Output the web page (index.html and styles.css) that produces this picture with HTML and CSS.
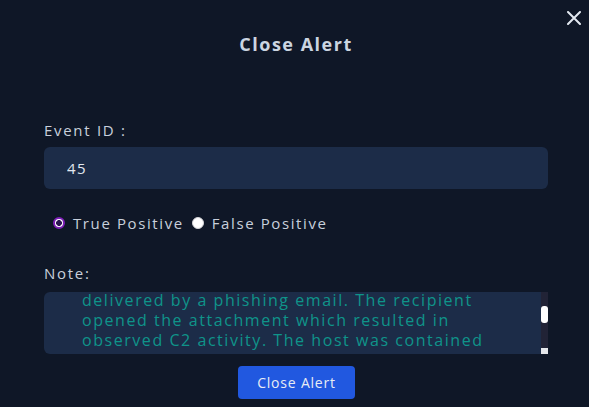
FILE: index.html
```html
<!DOCTYPE html>
<html lang="en">
<head>
<meta charset="utf-8">
<title>Close Alert</title>
<link rel="stylesheet" href="styles.css">
</head>
<body>
<div class="modal">
  <button class="close-x" type="button" aria-label="Close">
    <svg width="14" height="14" viewBox="0 0 14 14"><path d="M1 1L13 13M13 1L1 13" stroke="#e2e8f0" stroke-width="2" stroke-linecap="round"/></svg>
  </button>
  <h2 class="title">Close Alert</h2>
  <form class="form">
    <label class="label" for="eid">Event ID :</label>
    <input id="eid" class="input" type="text" value="45">
    <div class="radios">
      <label class="radio"><input type="radio" name="verdict" checked><span>True Positive</span></label>
      <label class="radio"><input type="radio" name="verdict"><span>False Positive</span></label>
    </div>
    <label class="label note-label" for="note">Note:</label>
    <div class="note-wrap">
      <textarea id="note" class="note">Initial access was achieved through a
malicious macro-enabled document
delivered by a phishing email. The recipient
opened the attachment which resulted in
observed C2 activity. The host was contained
via EDR ISO (WEB-SVR-01) and the
malicious file was quarantined. Credentials
for the affected user were reset and the
sender domain was blocked at the mail
gateway. No further lateral movement was
identified during the investigation.</textarea>
      <div class="scrollbar" aria-hidden="true"><div class="thumb"></div><div class="corner"></div></div>
    </div>
    <div class="actions"><button class="btn" type="button">Close Alert</button></div>
  </form>
</div>
<script src="script.js"></script>
</body>
</html>
```

FILE: styles.css
```css
* { box-sizing: border-box; }
html, body { margin: 0; height: 100%; }
body {
  background: #0f1727;
  font-family: "Open Sans", "Noto Sans", sans-serif;
  color: #cbd5e1;
}
.modal {
  position: relative;
  padding: 32px 41px 0 44px;
}
.close-x {
  position: absolute;
  top: 11px;
  right: 8px;
  width: 14px;
  height: 14px;
  padding: 0;
  border: 0;
  background: none;
  display: flex;
}
.title {
  margin: 0;
  text-align: center;
  font-size: 18px;
  line-height: 24px;
  font-weight: 700;
  letter-spacing: 1.5px;
  color: #cbd5e1;
}
.form {
  display: flex;
  flex-direction: column;
  margin-top: 64px;
}
.label {
  font-size: 15px;
  line-height: 20px;
  letter-spacing: 1.7px;
  color: #c8d0dc;
}
.input {
  margin-top: 7px;
  height: 42px;
  border: 0;
  border-radius: 6px;
  background: #1c2c48;
  color: #e2e8f0;
  font-family: inherit;
  font-size: 15px;
  letter-spacing: 1.4px;
  padding: 0 23px;
  outline: none;
}
.radios {
  display: flex;
  align-items: center;
  margin-top: 24px;
  height: 20px;
  margin-left: 9px;
}
.radio {
  display: flex;
  align-items: center;
  font-size: 15px;
  letter-spacing: 1.6px;
  color: #c8d0dc;
  margin-right: 8px;
}
.radio input {
  appearance: none;
  margin: 0 8px 0 0;
  width: 12px;
  height: 12px;
  border-radius: 50%;
  background: #ffffff;
  border: 1px solid #d4d4d8;
}
.radio input:checked {
  border: 2px solid #7e1fb8;
  background: radial-gradient(circle, #2a1450 0 2.6px, #ffffff 3.2px);
}
.note-label { margin-top: 30px; }
.note-wrap {
  position: relative;
  margin-top: 9px;
  display: flex;
}
.note {
  flex: 1;
  height: 62px;
  border: 0;
  border-radius: 6px;
  background: #1c2c48;
  color: #0f948a;
  font-family: inherit;
  font-size: 16px;
  line-height: 20px;
  letter-spacing: 1.55px;
  padding: 10px 10px 10px 38px;
  outline: none;
  resize: none;
  white-space: pre;
  overflow: hidden;
}
.scrollbar {
  position: absolute;
  top: 0;
  right: 0;
  width: 7px;
  height: 62px;
  background: #212336;
}
.thumb {
  position: absolute;
  top: 14px;
  left: 0;
  width: 7px;
  height: 17px;
  border-radius: 3px;
  background: #ffffff;
}
.corner {
  position: absolute;
  bottom: 0;
  left: 0;
  width: 7px;
  height: 6px;
  background: #e5e7eb;
}
.actions {
  display: flex;
  justify-content: center;
  margin-top: 12px;
  padding-left: 1px;
}
.btn {
  width: 117px;
  height: 33px;
  border: 0;
  border-radius: 4px;
  background: #2158e0;
  color: #e8ecf4;
  font-family: inherit;
  font-size: 14px;
  letter-spacing: 0.8px;
}
```

FILE: script.js
```js
document.getElementById('note').scrollTop = 52;
```
